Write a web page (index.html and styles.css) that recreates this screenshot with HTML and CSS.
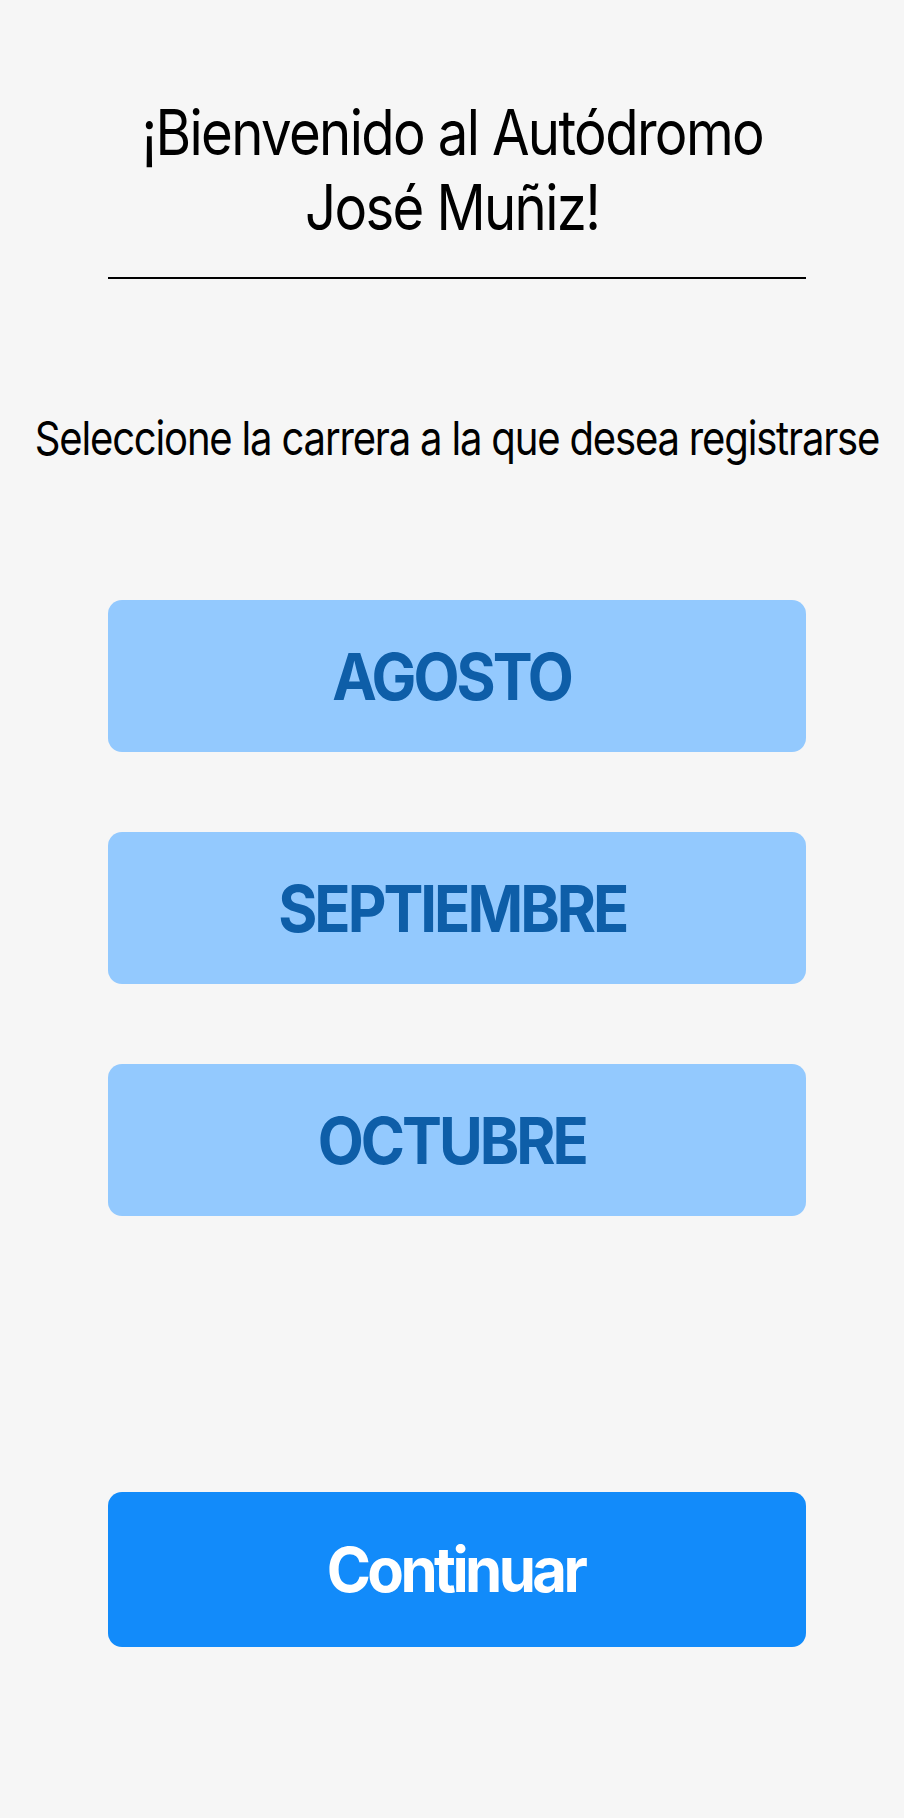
FILE: index.html
```html
<!DOCTYPE html>
<html lang="es">
<head>
<meta charset="utf-8">
<title>Autódromo José Muñiz</title>
<link rel="stylesheet" href="styles.css">
</head>
<body>
<main class="screen">
  <h1 class="title">
    <span class="line"><span class="squeeze">¡Bienvenido al Autódromo</span></span>
    <span class="line"><span class="squeeze">José Muñiz!</span></span>
  </h1>
  <hr class="divider">
  <p class="subtitle"><span class="squeeze">Seleccione la carrera a la que desea registrarse</span></p>
  <div class="races">
    <button class="race"><span class="squeeze">AGOSTO</span></button>
    <button class="race"><span class="squeeze">SEPTIEMBRE</span></button>
    <button class="race"><span class="squeeze">OCTUBRE</span></button>
  </div>
  <button class="continue"><span class="squeeze">Continuar</span></button>
</main>
</body>
</html>
```
FILE: styles.css
```css
html, body {
  margin: 0;
  padding: 0;
  background: #f6f6f6;
  overflow: hidden;
}
.screen {
  display: flex;
  flex-direction: column;
  align-items: center;
  padding: 95px 0 0 10px;
  font-family: Inter, "Noto Sans", sans-serif;
  color: #000;
}
.squeeze {
  display: inline-block;
  white-space: nowrap;
  transform-origin: center;
}
.title {
  margin: 0 9px 0 0;
  width: 100%;
  font-size: 63px;
  line-height: 75px;
  font-weight: 400;
  letter-spacing: -0.03em;
  display: flex;
  flex-direction: column;
  align-items: center;
  overflow: hidden;
}
.title .line {
  display: flex;
  justify-content: center;
  width: 100%;
}
.title .squeeze {
  transform: scaleX(0.865);
}
.divider {
  margin: 32px 0 0;
  width: 698px;
  height: 2px;
  border: 0;
  background: #000;
}
.subtitle {
  margin: 131px 1px 0 0;
  width: 100%;
  display: flex;
  justify-content: center;
  overflow: hidden;
  font-size: 47px;
  line-height: 56px;
  letter-spacing: -0.03em;
}
.subtitle .squeeze {
  transform: scaleX(0.853);
}
.races {
  margin-top: 134px;
  display: flex;
  flex-direction: column;
  gap: 80px;
}
.race, .continue {
  width: 698px;
  border: 0;
  border-radius: 14px;
  display: flex;
  align-items: center;
  justify-content: center;
  font-family: Inter, "Noto Sans", sans-serif;
}
.race {
  height: 152px;
  padding: 0 10px 0 0;
  background: #93c9fe;
  color: #0e5ea8;
  font-size: 65px;
  font-weight: 700;
  letter-spacing: -0.05em;
}
.race .squeeze {
  transform: scaleX(0.92);
}
.continue {
  margin-top: 276px;
  height: 155px;
  padding: 0 4px 0 0;
  background: #128bfa;
  color: #fff;
  font-size: 62px;
  font-weight: 700;
  letter-spacing: -0.06em;
}
.continue .squeeze {
  transform: scaleX(0.965);
}
```
